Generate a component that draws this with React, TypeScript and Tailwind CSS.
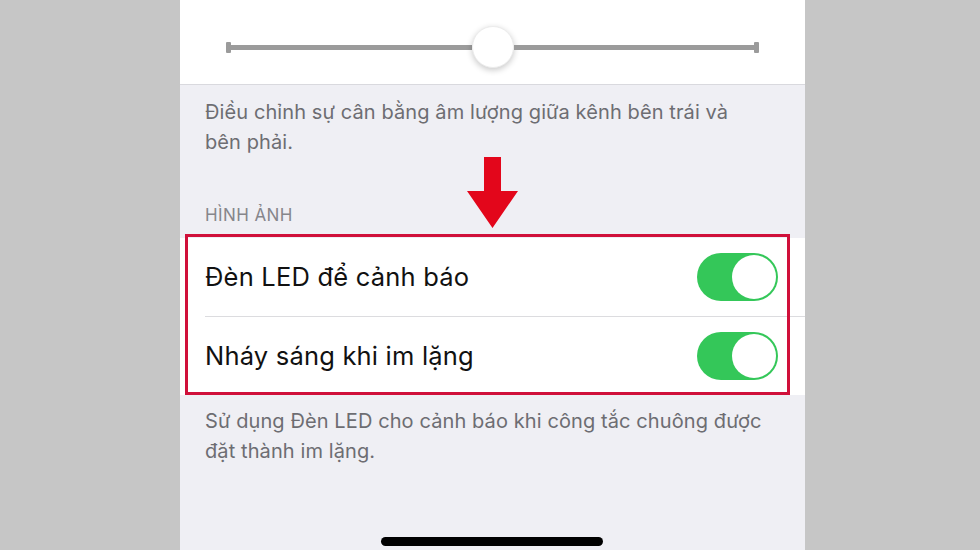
import { Fragment } from 'react';

const rows = ['Đèn LED để cảnh báo', 'Nháy sáng khi im lặng'];

const Toggle = () => (
  <div className="w-[81px] h-[48px] rounded-full bg-[#34c759] flex items-center justify-end pr-[2px]">
    <div className="w-[44px] h-[44px] rounded-full bg-white" />
  </div>
);

const App = () => {
  return (
    <div
      className="w-[980px] h-[550px] bg-[#c6c6c6] flex overflow-hidden"
      style={{ fontFamily: 'Inter, "Noto Sans", sans-serif' }}
    >
      <div className="relative ml-[180px] w-[625px] h-full bg-[#efeff4] flex flex-col">
        {/* balance slider */}
        <div className="h-[85px] bg-white border-b border-[#d9d9de] flex items-start pt-[26px] px-[46px]">
          <div className="flex-1 flex items-center h-[42px]">
            <div className="w-[5px] h-[11px] bg-[#9b9b9b] rounded-[1px]" />
            <div className="flex-1 h-[5px] bg-[#9b9b9b]" />
            <div className="w-[42px] h-[42px] rounded-full bg-white shadow-[0_2px_6px_rgba(0,0,0,0.22)] border border-[#ececec]" />
            <div className="flex-1 h-[5px] bg-[#9b9b9b]" />
            <div className="w-[5px] h-[11px] bg-[#9b9b9b] rounded-[1px]" />
          </div>
        </div>

        <p className="pt-[12px] px-[25px] text-[20px] leading-[30px] text-[#6d6d72] tracking-[0.1px]">
          Điều chỉnh sự cân bằng âm lượng giữa kênh bên trái và
          <br />
          bên phải.
        </p>

        <div className="mt-[47px] px-[25px] text-[17px] leading-[22px] text-[#86868b] tracking-[0.4px]">
          HÌNH ẢNH
        </div>

        <div className="mt-[12px] bg-white">
          {rows.map((label, i) => (
            <Fragment key={label}>
              {i > 0 && <div className="ml-[25px] h-px bg-[#dcdcdf]" />}
              <div className="h-[78px] flex items-center justify-between pl-[25px] pr-[27px]">
                <span className="text-[25.5px] text-[#111] tracking-[0.2px]">{label}</span>
                <Toggle />
              </div>
            </Fragment>
          ))}
        </div>

        <p className="pt-[11px] px-[25px] text-[20px] leading-[30px] text-[#6d6d72] tracking-[0.1px]">
          Sử dụng Đèn LED cho cảnh báo khi công tắc chuông được
          <br />
          đặt thành im lặng.
        </p>

        <div className="mt-auto mb-[4px] flex justify-center">
          <div className="w-[222px] h-[9px] rounded-full bg-black ml-[-2px]" />
        </div>

        {/* annotation overlay */}
        <div className="absolute left-[5px] top-[234px] w-[605px] h-[161px] border-[3px] border-[#d0103a]" />
        <svg className="absolute left-[287px] top-[157px]" width="52" height="72" viewBox="0 0 52 72">
          <path d="M17 0 H34 V34 H51 L25.5 71 L0 34 H17 Z" fill="#e3061b" />
        </svg>
      </div>
    </div>
  );
};

export default App;
